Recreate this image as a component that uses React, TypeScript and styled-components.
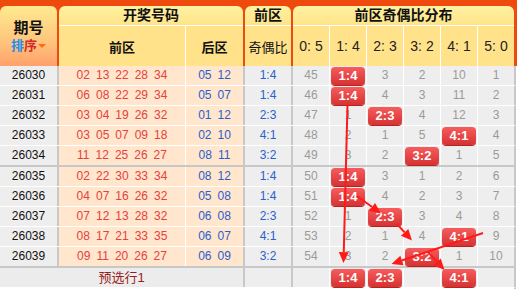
import styled, { createGlobalStyle } from 'styled-components'

interface DrawRow {
  issue: string
  front: string[]
  back: string[]
  ratio: string
  miss: number[]
}

const rows: DrawRow[] = [
  { issue: '26030', front: ['02', '13', '22', '28', '34'], back: ['05', '12'], ratio: '1:4', miss: [45, 0, 3, 2, 10, 1] },
  { issue: '26031', front: ['06', '08', '22', '29', '34'], back: ['05', '07'], ratio: '1:4', miss: [46, 0, 4, 3, 11, 2] },
  { issue: '26032', front: ['03', '04', '19', '26', '32'], back: ['01', '12'], ratio: '2:3', miss: [47, 1, 0, 4, 12, 3] },
  { issue: '26033', front: ['03', '05', '07', '09', '18'], back: ['02', '10'], ratio: '4:1', miss: [48, 2, 1, 5, 0, 4] },
  { issue: '26034', front: ['11', '12', '25', '26', '27'], back: ['08', '11'], ratio: '3:2', miss: [49, 3, 2, 0, 1, 5] },
  { issue: '26035', front: ['02', '22', '30', '33', '34'], back: ['08', '12'], ratio: '1:4', miss: [50, 0, 3, 1, 2, 6] },
  { issue: '26036', front: ['04', '07', '16', '26', '32'], back: ['05', '08'], ratio: '1:4', miss: [51, 0, 4, 2, 3, 7] },
  { issue: '26037', front: ['07', '12', '13', '28', '32'], back: ['06', '08'], ratio: '2:3', miss: [52, 1, 0, 3, 4, 8] },
  { issue: '26038', front: ['08', '17', '21', '33', '35'], back: ['06', '07'], ratio: '4:1', miss: [53, 2, 1, 4, 0, 9] },
  { issue: '26039', front: ['09', '11', '20', '26', '27'], back: ['06', '09'], ratio: '3:2', miss: [54, 3, 2, 0, 1, 10] },
]

const ratioLabels = ['0: 5', '1: 4', '2: 3', '3: 2', '4: 1', '5: 0']
const ratioText = ['0:5', '1:4', '2:3', '3:2', '4:1', '5:0']
const picked = [1, 2, 4]

type Pt = [number, number]
const arrows: [Pt, Pt][] = [
  [[347.5, 104], [343.5, 263]],
  [[357, 196], [381, 213.5]],
  [[397, 224], [412, 240.5]],
  [[483, 233], [391.5, 264]],
  [[428, 252], [444.5, 270]],
]

const arrowParts = ([x1, y1]: Pt, [x2, y2]: Pt) => {
  const len = Math.hypot(x2 - x1, y2 - y1)
  const ux = (x2 - x1) / len
  const uy = (y2 - y1) / len
  const bx = x2 - ux * 11
  const by = y2 - uy * 11
  const head = `${x2},${y2} ${bx - uy * 5},${by + ux * 5} ${bx + uy * 5},${by - ux * 5}`
  return { bx, by, head }
}

const App = () => {
  return (
    <Page>
      <GlobalStyle />
      <Header>
        <IssueHead>
          <IssueTitle>期号</IssueTitle>
          <SortLink>
            <span className="blue">排</span>
            <span className="red">序</span>
            <SortCaret />
          </SortLink>
        </IssueHead>
        <HeadGroup>
          <GroupTitle>开奖号码</GroupTitle>
          <SubRow>
            <SubCell $w={126} $bold>前区</SubCell>
            <SubCell $w={57} $bold>后区</SubCell>
          </SubRow>
        </HeadGroup>
        <HeadGroup>
          <GroupTitle>前区</GroupTitle>
          <SubRow>
            <SubCell $w={46}>奇偶比</SubCell>
          </SubRow>
        </HeadGroup>
        <HeadGroup>
          <GroupTitle>前区奇偶比分布</GroupTitle>
          <SubRow>
            {ratioLabels.map((r) => (
              <SubCell key={r} $w={36} $ratio>
                {r}
              </SubCell>
            ))}
          </SubRow>
        </HeadGroup>
      </Header>

      {rows.map((row, i) => {
        const hit = Number(row.ratio[0])
        return (
          <Row key={row.issue} $end={i % 5 === 4}>
            <IssueCell>{row.issue}</IssueCell>
            <FrontCell>
              {row.front.map((n, k) => (
                <Num key={k}>{n}</Num>
              ))}
            </FrontCell>
            <BackCell>
              {row.back.map((n, k) => (
                <Num key={k}>{n}</Num>
              ))}
            </BackCell>
            <RatioCell>{row.ratio}</RatioCell>
            {row.miss.map((m, c) => (
              <DistCell key={c} $first={c === 0}>
                {c === hit ? <Badge>{ratioText[c]}</Badge> : m}
              </DistCell>
            ))}
          </Row>
        )
      })}

      <Row>
        <PickLabel>预选行1</PickLabel>
        <RatioCell />
        {ratioText.map((r, c) => (
          <DistCell key={r} $first={c === 0}>
            {picked.includes(c) && <Badge>{r}</Badge>}
          </DistCell>
        ))}
      </Row>
      <Row />

      <ArrowLayer width="517" height="289" viewBox="0 0 517 289">
        {arrows.map(([a, b], i) => {
          const { bx, by, head } = arrowParts(a, b)
          return (
            <g key={i}>
              <line x1={a[0]} y1={a[1]} x2={bx} y2={by} stroke="#ff1a1a" strokeWidth="2" />
              <polygon points={head} fill="#ff1a1a" />
            </g>
          )
        })}
      </ArrowLayer>
    </Page>
  )
}

export default App

const GlobalStyle = createGlobalStyle`
  body {
    margin: 0;
    background: #fff;
    font-family: "Liberation Sans", Arial, "Noto Sans CJK SC", sans-serif;
  }
`

const Page = styled.div`
  position: relative;
  width: 517px;
  height: 289px;
  overflow: hidden;
  background: #fff;
`

const Header = styled.div`
  display: grid;
  grid-template-columns: 57px 184px 46px 221px;
  column-gap: 2px;
  height: 66px;
  box-sizing: border-box;
  padding: 6px 3px 0 0;
  background: #ef4a0d;
  color: #111;
`

const IssueHead = styled.div`
  display: flex;
  flex-direction: column;
  align-items: center;
  padding-top: 13px;
  gap: 2px;
  border-radius: 6px 6px 0 0;
  background: linear-gradient(#ffea90, #ffc47c 60%, #ffa06a);
`

const IssueTitle = styled.span`
  font-size: 15px;
  font-weight: bold;
  line-height: 17px;
`

const SortLink = styled.span`
  display: flex;
  align-items: center;
  font-size: 13px;
  font-weight: bold;
  line-height: 15px;

  .blue {
    color: #1e8ff0;
  }
  .red {
    color: #d42a2a;
  }
`

const SortCaret = styled.i`
  width: 0;
  height: 0;
  margin-left: 1px;
  border-left: 4px solid transparent;
  border-right: 4px solid transparent;
  border-top: 4px solid #ff6a12;
`

const HeadGroup = styled.div`
  display: flex;
  flex-direction: column;
  border-radius: 6px 6px 0 0;
  overflow: hidden;
`

const GroupTitle = styled.div`
  height: 19px;
  line-height: 19px;
  text-align: center;
  font-size: 14px;
  font-weight: bold;
  background: linear-gradient(#fff1a4, #ffe486);
  border-bottom: 1px solid #fff;
`

const SubRow = styled.div`
  display: flex;
  height: 40px;
  background: #ffe28a;
`

const SubCell = styled.div<{ $w: number; $bold?: boolean; $ratio?: boolean }>`
  width: ${(p) => p.$w}px;
  display: flex;
  align-items: center;
  justify-content: center;
  font-size: ${(p) => (p.$ratio ? 14 : 13)}px;
  font-weight: ${(p) => (p.$bold ? 'bold' : 'normal')};
  color: ${(p) => (p.$ratio ? '#222' : '#111')};
  white-space: nowrap;

  & + & {
    border-left: 1px solid #fff;
  }
`

const Row = styled.div<{ $end?: boolean }>`
  display: flex;
  height: 19px;
  border-bottom: ${(p) => (p.$end ? '2px solid #c8c8c8' : '1px solid #fff')};
  border-right: 2px solid #c8c8c8;
  width: 514px;
  font-size: 12px;
  line-height: 19px;
`

const Cell = styled.div`
  display: flex;
  align-items: center;
  justify-content: center;
  height: 19px;
  white-space: nowrap;
`

const IssueCell = styled(Cell)`
  width: 57px;
  background: #efeeee;
  color: #111;
`

const FrontCell = styled(Cell)`
  width: 126px;
  border-left: 2px solid #c8c8c8;
  background: #ffe6cc;
  color: #e8403e;
`

const BackCell = styled(Cell)`
  width: 57px;
  border-left: 1px solid #fff;
  background: #ffe6cc;
  color: #2a5fd0;
`

const Num = styled.span`
  margin: 0 3px;
`

const RatioCell = styled(Cell)`
  width: 46px;
  border-left: 2px solid #c8c8c8;
  background: #efeeee;
  color: #2a5fd0;
`

const DistCell = styled(Cell)<{ $first?: boolean }>`
  width: 36px;
  border-left: ${(p) => (p.$first ? '2px solid #c8c8c8' : '1px solid #fff')};
  background: #efeeee;
  color: #9a9a9a;
`

const Badge = styled.span`
  width: 34px;
  height: 18px;
  display: flex;
  align-items: center;
  justify-content: center;
  border-radius: 4px;
  background: linear-gradient(#f75c5c, #d63232);
  box-shadow: 0 1px 0 #b82222;
  color: #fff;
  font-size: 13px;
  font-weight: bold;
`

const PickLabel = styled(Cell)`
  width: 243px;
  background: #ececec;
  color: #9a1e1e;
  font-size: 13px;
`

const ArrowLayer = styled.svg`
  position: absolute;
  top: 0;
  left: 0;
  pointer-events: none;
`
